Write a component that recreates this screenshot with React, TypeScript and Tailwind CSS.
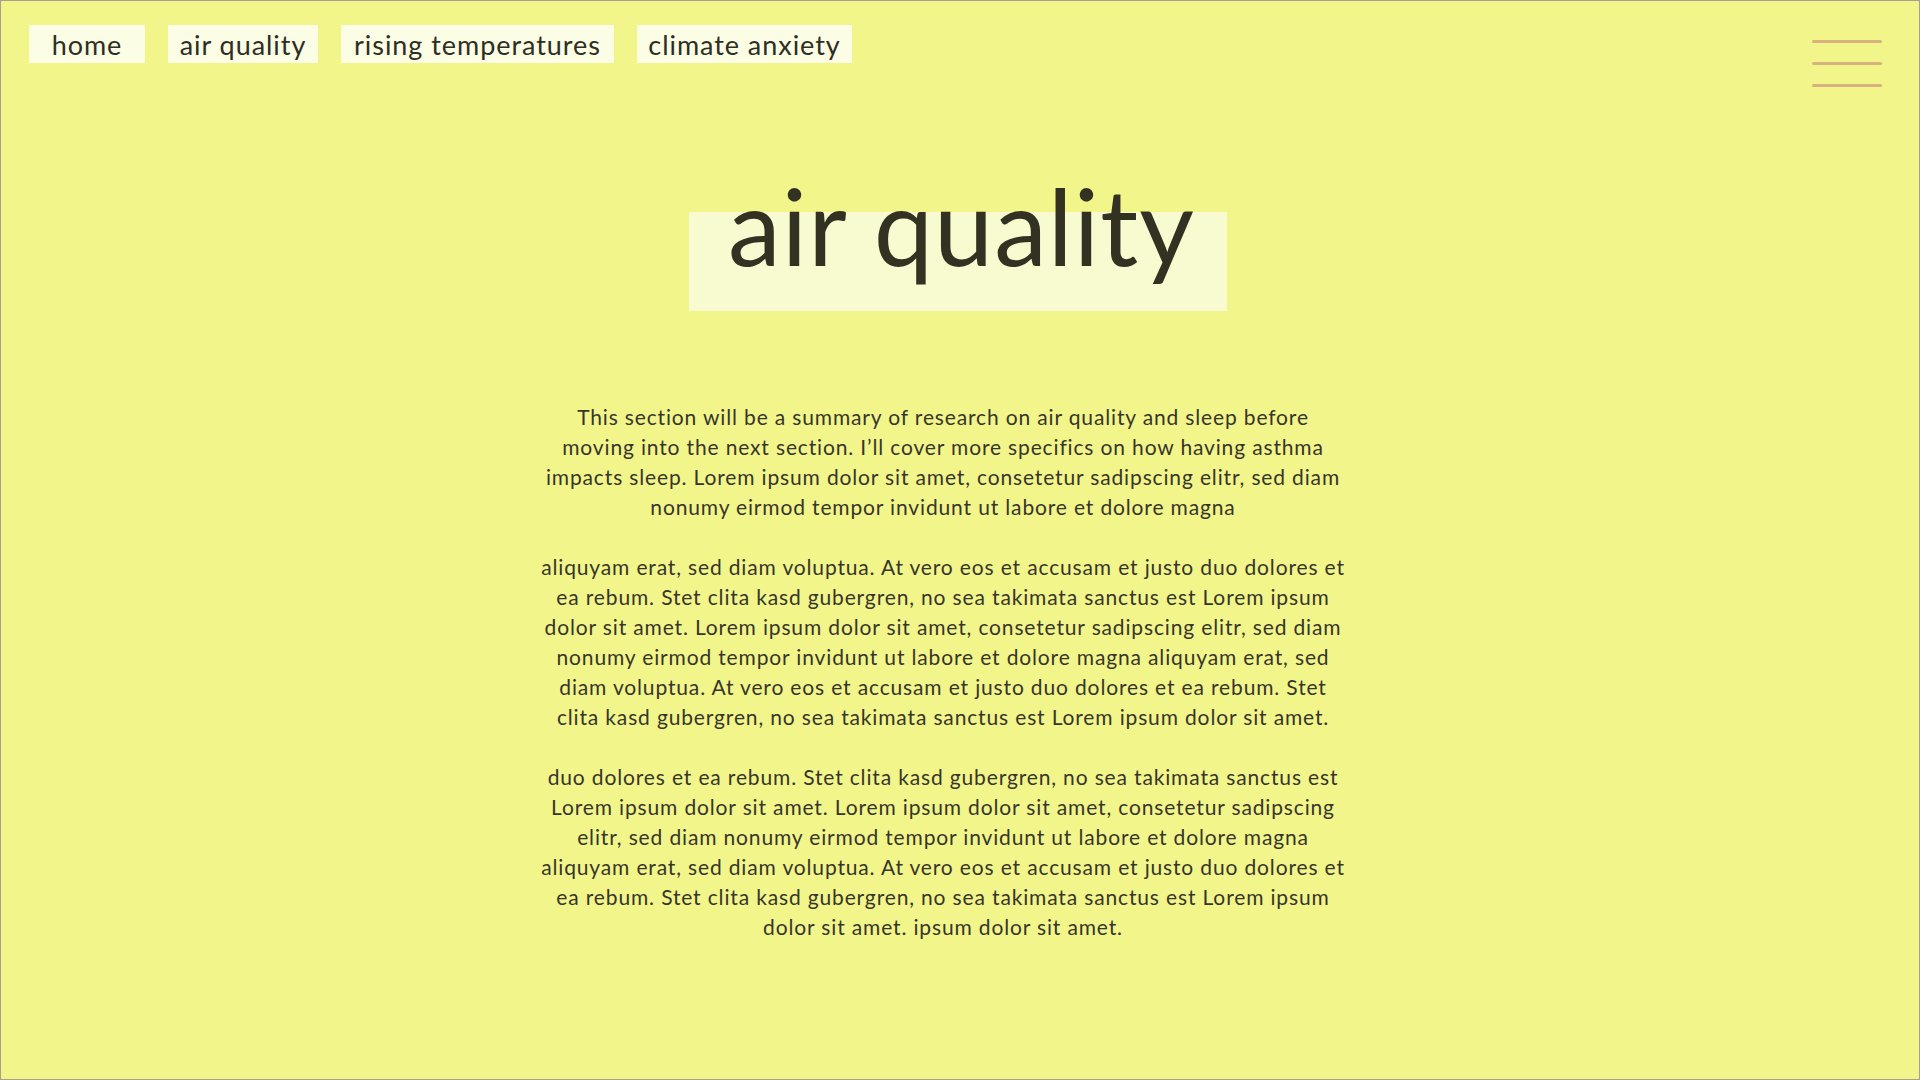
import React from "react";

const font = { fontFamily: "Lato, 'Noto Sans', sans-serif" };

const navItems = [
  { label: "home", w: "w-[116px]" },
  { label: "air quality", w: "w-[150px]" },
  { label: "rising temperatures", w: "w-[273px]" },
  { label: "climate anxiety", w: "w-[215px]" },
];

const paragraphs: string[][] = [
  [
    "This section will be a summary of research on air quality and sleep before",
    "moving into the next section. I\u2019ll cover more specifics on how having asthma",
    "impacts sleep. Lorem ipsum dolor sit amet, consetetur sadipscing elitr, sed diam",
    "nonumy eirmod tempor invidunt ut labore et dolore magna",
  ],
  [
    "aliquyam erat, sed diam voluptua. At vero eos et accusam et justo duo dolores et",
    "ea rebum. Stet clita kasd gubergren, no sea takimata sanctus est Lorem ipsum",
    "dolor sit amet. Lorem ipsum dolor sit amet, consetetur sadipscing elitr, sed diam",
    "nonumy eirmod tempor invidunt ut labore et dolore magna aliquyam erat, sed",
    "diam voluptua. At vero eos et accusam et justo duo dolores et ea rebum. Stet",
    "clita kasd gubergren, no sea takimata sanctus est Lorem ipsum dolor sit amet.",
  ],
  [
    "duo dolores et ea rebum. Stet clita kasd gubergren, no sea takimata sanctus est",
    "Lorem ipsum dolor sit amet. Lorem ipsum dolor sit amet, consetetur sadipscing",
    "elitr, sed diam nonumy eirmod tempor invidunt ut labore et dolore magna",
    "aliquyam erat, sed diam voluptua. At vero eos et accusam et justo duo dolores et",
    "ea rebum. Stet clita kasd gubergren, no sea takimata sanctus est Lorem ipsum",
    "dolor sit amet. ipsum dolor sit amet.",
  ],
];

export default function App() {
  return (
    <div
      className="w-[1920px] h-[1080px] bg-[#f2f58a] border border-[#a9a190] text-[#333222] flex flex-col overflow-hidden"
      style={font}
    >
      <header className="flex items-start justify-between pl-[28px] pr-[37px] pt-[24px]">
        <nav className="flex gap-[23px]">
          {navItems.map((n) => (
            <a
              key={n.label}
              className={`${n.w} h-[38px] bg-[#fbfde5] flex items-center justify-center text-[27px] leading-none tracking-[0.95px] text-[#2f2e22]`}
            >
              {n.label}
            </a>
          ))}
        </nav>
        <button className="mt-[15px] w-[70px] flex flex-col gap-[19px]">
          <span className="block h-[3px] rounded-full bg-[#d9b37f]" />
          <span className="block h-[3px] rounded-full bg-[#d9b37f]" />
          <span className="block h-[3px] rounded-full bg-[#d9b37f]" />
        </button>
      </header>

      <main className="flex flex-col items-center">
        <div className="mt-[125px] ml-[-5px] w-[538px] h-[99px] bg-[#f8fad0] flex justify-center">
          <h1 className="text-[106px] leading-none mt-[-40px] ml-[8px] text-[#333222] tracking-[1px]">
            air quality
          </h1>
        </div>

        <div className="mt-[91px] ml-[-34px] w-[860px] flex flex-col gap-[30px] text-[21px] leading-[30px] tracking-[0.85px] text-center text-[#37362a]">
          {paragraphs.map((p, i) => (
            <p key={i}>
              {p.map((line, j) => (
                <span key={j} className="block whitespace-nowrap">
                  {line}
                </span>
              ))}
            </p>
          ))}
        </div>
      </main>
    </div>
  );
}
